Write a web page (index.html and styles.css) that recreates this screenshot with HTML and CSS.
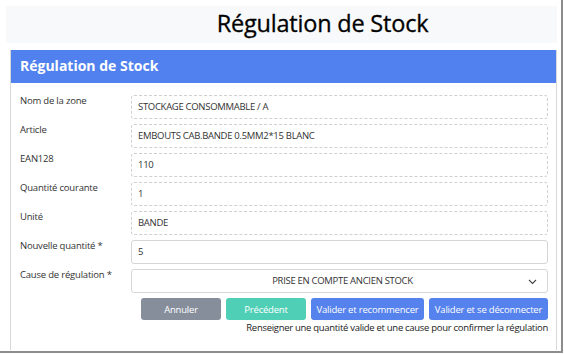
FILE: index.html
```html
<!DOCTYPE html>
<html lang="fr">
<head>
	<meta charset="utf-8">
	<title>Régulation de Stock</title>
	<link rel="stylesheet" href="styles.css">
</head>
<body>
	<div class="frame">
		<div class="topbar">
			<h1>Régulation de Stock</h1>
		</div>

		<div class="card">
			<div class="card-header">Régulation de Stock</div>
			<div class="card-body">
				<div class="row">
					<label>Nom de la zone</label>
					<div class="field readonly">STOCKAGE CONSOMMABLE / A</div>
				</div>
				<div class="row">
					<label>Article</label>
					<div class="field readonly">EMBOUTS CAB.BANDE 0.5MM2*15 BLANC</div>
				</div>
				<div class="row">
					<label>EAN128</label>
					<div class="field readonly">110</div>
				</div>
				<div class="row">
					<label>Quantité courante</label>
					<div class="field readonly">1</div>
				</div>
				<div class="row">
					<label>Unité</label>
					<div class="field readonly">BANDE</div>
				</div>
				<div class="row">
					<label>Nouvelle quantité *</label>
					<div class="field">5</div>
				</div>
				<div class="row">
					<label>Cause de régulation *</label>
					<div class="field select">
						<span>PRISE EN COMPTE ANCIEN STOCK</span>
						<svg class="chevron" width="9" height="6" viewBox="0 0 9 6"><path d="M1 1l3.5 3.5L8 1" fill="none" stroke="#444" stroke-width="1.1"/></svg>
					</div>
				</div>

				<div class="actions">
					<button class="bt bt-gray">Annuler</button>
					<button class="bt bt-teal">Précédent</button>
					<button class="bt bt-blue">Valider et recommencer</button>
					<button class="bt bt-blue">Valider et se déconnecter</button>
				</div>
				<p class="hint">Renseigner une quantité valide et une cause pour confirmer la régulation</p>
			</div>
		</div>
	</div>
</body>
</html>
```

FILE: styles.css
```css
* {
	box-sizing: border-box;
}

body {
	margin: 0;
	background: #fff;
	font-family: "Open Sans", "Liberation Sans", sans-serif;
	color: #333;
}

.frame {
	width: 563px;
	height: 353px;
	border-right: 2px solid #8c8c8c;
	border-bottom: 2px solid #8c8c8c;
	padding-top: 6px;
	overflow: hidden;
}

.topbar {
	margin: 0 4px 0 6px;
	height: 37px;
	background: #f8f9fa;
	padding-left: 82px;
	text-align: center;
}

.topbar h1 {
	margin: 0;
	font-size: 23.5px;
	font-weight: 400;
	line-height: 34px;
	color: #000;
	letter-spacing: -0.2px;
	-webkit-text-stroke: 0.3px #000;
}

.card {
	margin: 7px 4px 0 10px;
	height: 300px;
	border-left: 1px solid #d8d8d8;
	border-right: 1px solid #d8d8d8;
}

.card-header {
	height: 33px;
	background: #5181ee;
	color: #fff;
	font-weight: bold;
	font-size: 14px;
	line-height: 31px;
	padding-left: 9px;
}

.card-body {
	padding: 12px 8px 0 9px;
}

.row {
	display: flex;
	height: 24px;
	margin-bottom: 5px;
}

.row label {
	width: 111px;
	font-size: 9.5px;
	line-height: 12px;
	letter-spacing: -0.2px;
	color: #333;
}

.field {
	flex: 1;
	height: 24px;
	border: 1px solid #d6d6d6;
	border-radius: 3px;
	padding-left: 6px;
	font-size: 9.5px;
	line-height: 22px;
	letter-spacing: -0.3px;
	color: #333;
}

.readonly {
	border-style: dashed;
	border-color: #d0d0d0;
}

.select {
	display: flex;
	justify-content: center;
	position: relative;
}

.chevron {
	position: absolute;
	right: 10px;
	top: 9px;
}

.actions {
	display: flex;
	justify-content: flex-end;
	gap: 5px;
}

.bt {
	height: 22px;
	border: none;
	border-radius: 3px;
	color: #fff;
	font-family: "Open Sans", "Liberation Sans", sans-serif;
	font-size: 9.5px;
	letter-spacing: -0.2px;
	padding: 0;
}

.bt-gray {
	width: 80px;
	background: #868e9c;
}

.bt-teal {
	width: 80px;
	background: #4fd0b6;
}

.bt-blue {
	background: #5582ec;
}

.bt-blue:nth-child(3) {
	width: 113px;
}

.bt-blue:nth-child(4) {
	width: 119px;
}

.hint {
	margin: 2px 0 0;
	text-align: right;
	font-size: 9.5px;
	line-height: 12px;
	letter-spacing: -0.3px;
	color: #222;
}
```
